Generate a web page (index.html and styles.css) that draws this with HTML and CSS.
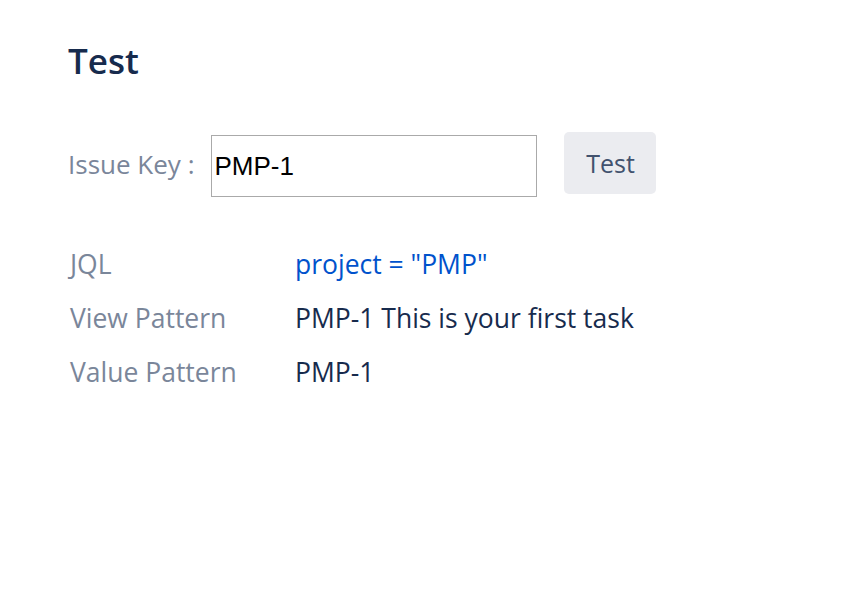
FILE: index.html
```html
<!DOCTYPE html>
<html>
<head>
<meta charset="utf-8">
<link rel="stylesheet" href="styles.css">
</head>
<body>
<div class="page">
  <h1 class="title">Test</h1>
  <div class="test-row">
    <label class="key-label" for="key">Issue Key :</label>
    <input id="key" class="key-input" type="text" value="PMP-1">
    <button class="test-btn">Test</button>
  </div>
  <div class="results">
    <div class="r-label">JQL</div>
    <div class="r-value link">project = "PMP"</div>
    <div class="r-label">View Pattern</div>
    <div class="r-value">PMP-1 This is your first task</div>
    <div class="r-label">Value Pattern</div>
    <div class="r-value">PMP-1</div>
  </div>
</div>
</body>
</html>
```
FILE: styles.css
```css
html, body {
  margin: 0;
  padding: 0;
  background: #fff;
}
.page {
  padding: 36px 0 0 68px;
  font-family: "Open Sans", "Noto Sans", sans-serif;
  color: #172b4d;
}
.title {
  margin: 0;
  font-size: 35px;
  font-weight: 600;
  line-height: 50px;
  color: #172b4d;
}
.test-row {
  display: flex;
  align-items: flex-start;
  margin-top: 46px;
}
.key-label {
  font-size: 26px;
  line-height: 36px;
  margin-top: 14px;
  color: #7a869a;
  margin-right: 17px;
}
.key-input {
  box-sizing: border-box;
  width: 326px;
  height: 62px;
  border: 1px solid #aaaaaa;
  padding: 0 2px;
  margin: 3px 0 0 0;
  font-family: "Liberation Sans", Arial, sans-serif;
  font-size: 26px;
  color: #000;
  outline: none;
}
.test-btn {
  box-sizing: border-box;
  height: 62px;
  width: 92px;
  margin-left: 27px;
  border: none;
  border-radius: 5px;
  background: #ebecf0;
  color: #42526e;
  font-family: "Open Sans", "Noto Sans", sans-serif;
  font-size: 25px;
  padding: 0;
}
.results {
  display: grid;
  grid-template-columns: 225px auto;
  row-gap: 18px;
  margin-top: 49px;
  padding-left: 2px;
  font-size: 26.5px;
  line-height: 36px;
}
.r-label {
  color: #7a869a;
}
.r-value {
  color: #172b4d;
}
.r-value.link {
  color: #0052cc;
}
```
